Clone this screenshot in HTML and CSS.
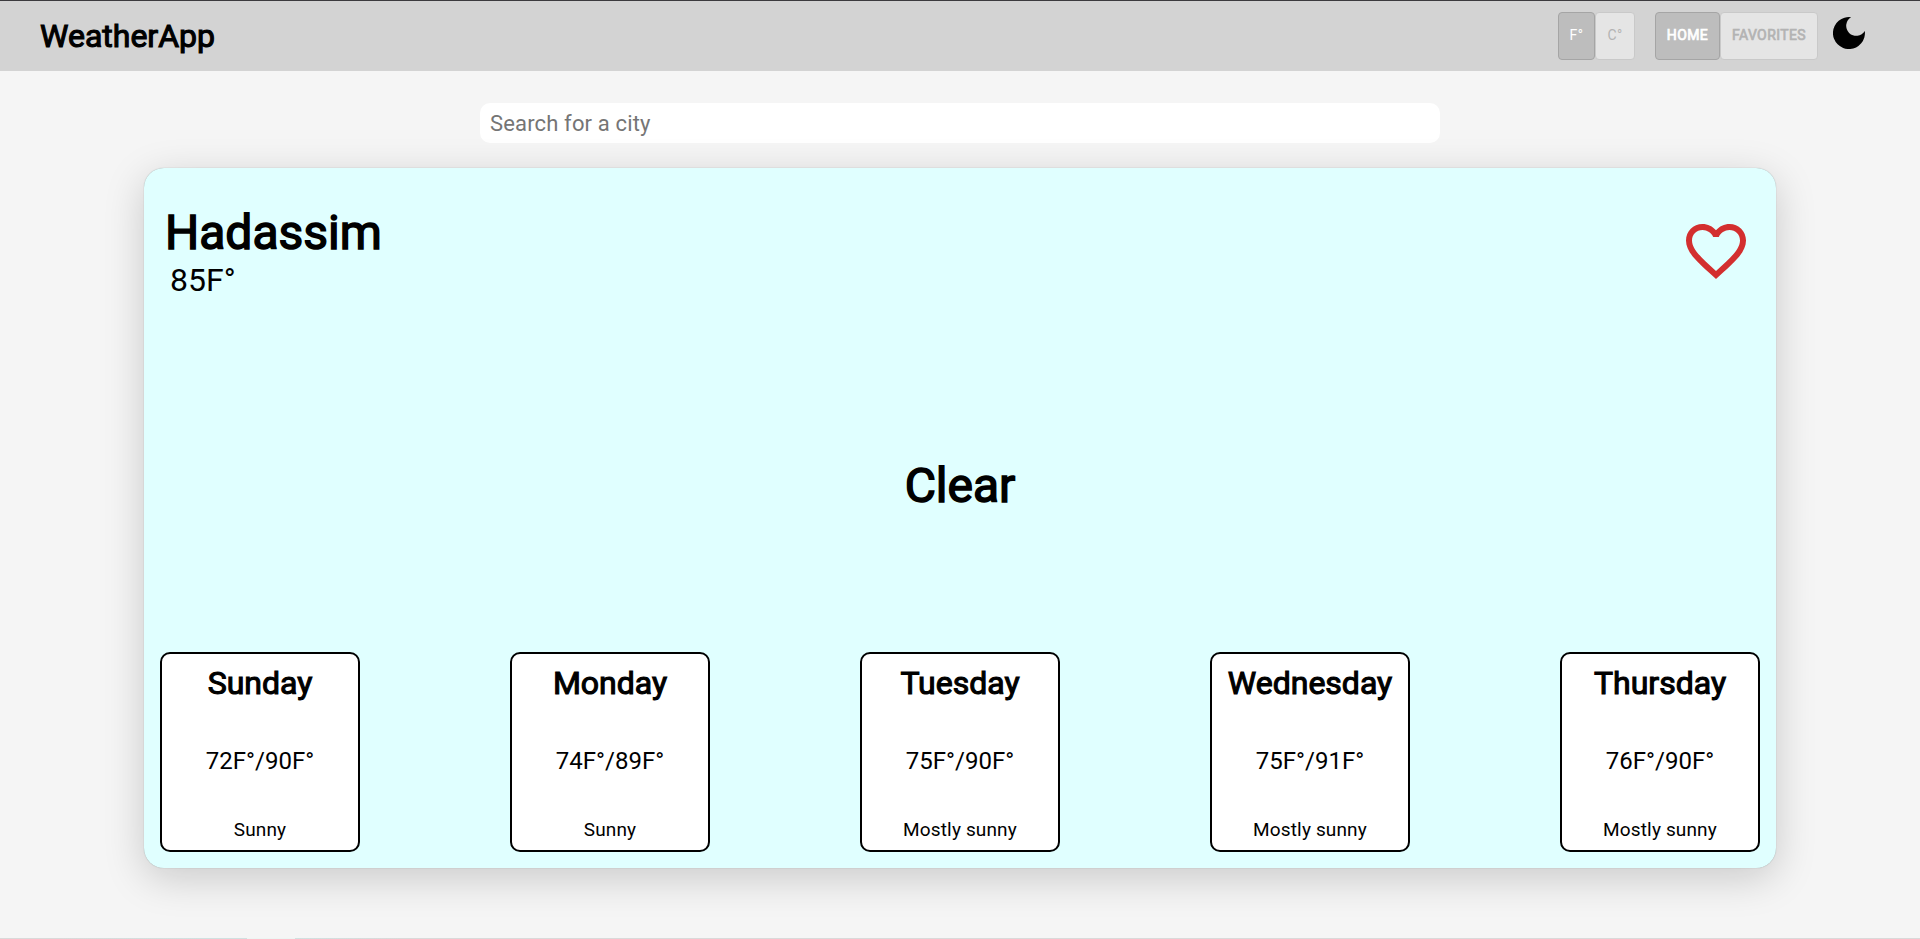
FILE: index.html
```html
<!DOCTYPE html>
<html lang="en">
<head>
<meta charset="utf-8">
<title>WeatherApp</title>
<link rel="stylesheet" href="styles.css">
</head>
<body>
<header class="header">
  <h1 class="logo">WeatherApp</h1>
  <nav class="controls">
    <div class="group units">
      <button class="toggle unit selected">F°</button>
      <button class="toggle unit">C°</button>
    </div>
    <div class="group pages">
      <button class="toggle page home selected">HOME</button>
      <button class="toggle page favorites">FAVORITES</button>
    </div>
    <svg class="moon" viewBox="0 0 32 32"><path d="M18.1.2A10 10 0 1 0 31.8 13.9A16 16 0 1 1 18.1.2Z"/></svg>
  </nav>
</header>
<main class="main">
  <input class="search" type="text" placeholder="Search for a city">
  <section class="card">
    <div class="card-top">
      <div>
        <h2 class="city">Hadassim</h2>
        <p class="now">85F°</p>
      </div>
      <svg class="heart" viewBox="0 0 24 24"><path d="M16.5 3c-1.74 0-3.41.81-4.5 2.09C10.91 3.81 9.24 3 7.5 3 4.42 3 2 5.42 2 8.5c0 3.78 3.4 6.86 8.55 11.54L12 21.35l1.45-1.32C18.6 15.36 22 12.28 22 8.5 22 5.42 19.58 3 16.5 3zm-4.4 15.55-.1.1-.1-.1C7.14 14.24 4 11.39 4 8.5 4 6.5 5.5 5 7.5 5c1.54 0 3.04.99 3.57 2.36h1.87C13.46 5.99 14.96 5 16.5 5c2 0 3.5 1.5 3.5 3.5 0 2.89-3.14 5.74-7.9 10.05z"/></svg>
    </div>
    <h2 class="condition">Clear</h2>
    <div class="days">
      <article class="day"><h3 class="name">Sunday</h3><p class="temps">72F°/90F°</p><p class="text">Sunny</p></article>
      <article class="day"><h3 class="name">Monday</h3><p class="temps">74F°/89F°</p><p class="text">Sunny</p></article>
      <article class="day"><h3 class="name">Tuesday</h3><p class="temps">75F°/90F°</p><p class="text">Mostly sunny</p></article>
      <article class="day"><h3 class="name">Wednesday</h3><p class="temps">75F°/91F°</p><p class="text">Mostly sunny</p></article>
      <article class="day"><h3 class="name">Thursday</h3><p class="temps">76F°/90F°</p><p class="text">Mostly sunny</p></article>
    </div>
  </section>
</main>
<footer class="strip"></footer>
</body>
</html>
```
FILE: styles.css
```css
* { box-sizing: border-box; }
body {
  margin: 0;
  height: 939px;
  display: flex;
  flex-direction: column;
  overflow: hidden;
  background: #f5f5f5;
  color: #000;
  font-family: Roboto, "Liberation Sans", sans-serif;
}
h1, h2, h3, p { margin: 0; font-weight: 400; }
.header {
  height: 71px;
  flex: none;
  display: flex;
  justify-content: space-between;
  padding: 0 55px 0 40px;
  background: #d3d3d3;
  border-top: 1px solid #3b3a3e;
}
.logo {
  font-size: 32px;
  line-height: 38px;
  padding-top: 16px;
  -webkit-text-stroke: 1.1px #000;
}
.controls { display: flex; align-items: flex-start; padding-top: 11px; }
.group { display: flex; }
.units { margin-right: 20px; }
.toggle {
  height: 48px;
  padding: 0 0 2px;
  font-family: inherit;
  font-size: 14px;
  letter-spacing: 0.4px;
  color: #b3b3b3;
  background: #e5e5e5;
  border: 1px solid #c9c9c9;
  border-radius: 4px;
}
.selected { color: #fff; background: #bdbdbd; border-color: #a5a5a5; }
.unit { width: 37px; }
.unit + .unit { width: 40px; }
.page { -webkit-text-stroke: 0.7px currentColor; }
.home { width: 65px; }
.favorites { width: 98px; }
.moon { width: 32px; height: 32px; margin: 5px 0 0 15px; }
.main { flex: 1; display: flex; flex-direction: column; align-items: center; }
.search {
  width: 960px;
  height: 40px;
  margin: 32px 0 25px;
  padding: 0 10px;
  border: 0;
  border-radius: 10px;
  background: #fff;
  font-family: inherit;
  font-size: 22px;
  letter-spacing: 0.15px;
}
.search::placeholder { color: #757575; }
.card {
  width: 1632px;
  height: 700px;
  flex: none;
  display: flex;
  flex-direction: column;
  padding: 0 16px 16px;
  border-radius: 20px;
  background: #e0ffff;
  box-shadow: 0 0 1px rgba(0,0,0,.35), 0 10px 40px rgba(0,0,0,.18);
}
.card-top { display: flex; justify-content: space-between; height: 152px; padding: 35px 8px 0 5px; }
.city { font-size: 48px; line-height: 56px; padding-top: 2px; -webkit-text-stroke: 1.5px #000; }
.now { font-size: 32px; line-height: 38px; padding-left: 5px; }
.heart { width: 72px; height: 72px; margin-top: 12px; fill: #d32f2f; }
.condition {
  font-size: 48px;
  line-height: 58px;
  padding-top: 137px;
  text-align: center;
  -webkit-text-stroke: 1.5px #000;
}
.days { margin-top: auto; display: flex; justify-content: space-between; }
.day {
  width: 200px;
  height: 200px;
  display: flex;
  flex-direction: column;
  justify-content: space-between;
  padding: 10px 0 9px;
  border: 2px solid #000;
  border-radius: 10px;
  background: #fff;
  text-align: center;
}
.name { font-size: 32px; line-height: 38px; -webkit-text-stroke: 1.1px #000; }
.temps { font-size: 24px; line-height: 28px; }
.text { font-size: 19px; line-height: 22px; letter-spacing: 0.15px; }
.strip {
  flex: none;
  height: 1px;
  background: linear-gradient(90deg, #d9d9d9 60px, #d0e0e0 200px, #d0e0e0 247px, #edf5f3 247px, #edf5f3 295px, #d0e0e0 295px, #d9d9d9 400px);
}
```
